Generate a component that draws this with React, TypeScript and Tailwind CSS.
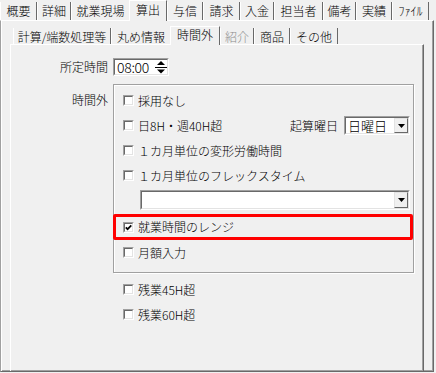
import React from "react";

type TabDef = { l: string; c: string; sel?: boolean; nr?: boolean; dis?: boolean };

const TOP: TabDef[] = [
  { l: "概要", c: "w-[37px]" },
  { l: "詳細", c: "w-[34px]" },
  { l: "就業現場", c: "w-[58px]", nr: true },
  { l: "算出", c: "w-[38px]", sel: true },
  { l: "与信", c: "w-[36px]" },
  { l: "請求", c: "w-[37px]" },
  { l: "入金", c: "w-[34px]" },
  { l: "担当者", c: "w-[49px]" },
  { l: "備考", c: "w-[33px]" },
  { l: "実績", c: "w-[36px]" },
  { l: "ﾌｧｲﾙ", c: "w-[37px]" },
];

const SUB: TabDef[] = [
  { l: "計算/端数処理等", c: "w-[98px]" },
  { l: "丸め情報", c: "w-[59px]", nr: true },
  { l: "時間外", c: "w-[50px]", sel: true },
  { l: "紹介", c: "w-[34px]", dis: true },
  { l: "商品", c: "w-[36px]" },
  { l: "その他", c: "w-[48px]" },
];

function TopTab({ t }: { t: TabDef }) {
  if (t.sel)
    return (
      <div
        className={`${t.c} relative z-10 -mb-[1px] flex h-[21px] items-center justify-center border-x border-t border-l-white border-t-white border-r-[#696969] bg-[#f0f0f0] pb-[2px]`}
      >
        {t.l}
      </div>
    );
  return (
    <div
      className={`${t.c} flex h-[18px] items-center justify-center ${
        t.nr ? "border-l border-l-white" : "border-x border-l-white border-r-[#696969]"
      }`}
    >
      {t.l}
    </div>
  );
}

function SubTab({ t }: { t: TabDef }) {
  if (t.sel)
    return (
      <div
        className={`${t.c} relative z-10 -mb-[1px] flex h-[19px] shrink-0 items-center justify-center border-x border-t border-l-white border-t-white border-r-[#696969] bg-[#f0f0f0] pb-[2px]`}
      >
        {t.l}
      </div>
    );
  return (
    <div
      className={`${t.c} flex h-[16px] shrink-0 items-center justify-center pt-[2px] ${
        t.nr ? "border-l border-l-white" : "border-x border-l-white border-r-[#696969]"
      } ${t.dis ? "text-[#8d8d8d]" : ""}`}
    >
      {t.l}
    </div>
  );
}

function Check({ checked }: { checked?: boolean }) {
  return (
    <span className="flex h-[11px] w-[11px] shrink-0 border border-t-[#a0a0a0] border-l-[#a0a0a0] border-b-white border-r-white">
      <span className="flex flex-1 items-center justify-center border border-t-[#696969] border-l-[#696969] border-b-[#e3e3e3] border-r-[#e3e3e3] bg-white">
        {checked && (
          <svg width="7" height="7" viewBox="0 0 7 7">
            <path d="M0.8 3.3 L2.6 5.2 L6.3 1.4" fill="none" stroke="#000" strokeWidth="1.7" />
          </svg>
        )}
      </span>
    </span>
  );
}

function CheckRow({ label, checked, className = "" }: { label: string; checked?: boolean; className?: string }) {
  return (
    <div className={`flex h-[25px] items-center ${className}`}>
      <Check checked={checked} />
      <span className="ml-[4px] whitespace-nowrap">{label}</span>
    </div>
  );
}

function Combo({ className = "", text = "" }: { className?: string; text?: string }) {
  return (
    <div className={`flex border border-t-[#a0a0a0] border-l-[#a0a0a0] border-b-white border-r-white ${className}`}>
      <div className="flex flex-1 border border-t-[#696969] border-l-[#696969] border-b-[#e3e3e3] border-r-[#e3e3e3] bg-white">
        <div className="flex flex-1 items-center pl-[2px] text-[13px]">{text}</div>
        <div className="flex w-[14px] items-center justify-center border border-t-[#e3e3e3] border-l-[#e3e3e3] border-b-[#696969] border-r-[#696969] bg-[#f0f0f0]">
          <svg width="7" height="4" viewBox="0 0 7 4">
            <path d="M0 0 H7 L3.5 4 Z" fill="#000" />
          </svg>
        </div>
      </div>
    </div>
  );
}

export default function App() {
  return (
    <div className="flex h-[373px] w-[436px] flex-col overflow-hidden bg-[#f0f0f0] font-['Noto_Sans_CJK_JP','Noto_Sans',sans-serif] text-[12px] font-light leading-none text-black">
      {/* top tab strip */}
      <div className="flex h-[20px] items-end">
        {TOP.map((t) => (
          <TopTab key={t.l} t={t} />
        ))}
      </div>

      {/* outer page */}
      <div className="flex h-[352px] w-[434px] flex-col border border-t-white border-l-[#a0a0a0] border-r-[#696969] border-b-[#696969] shadow-[inset_1px_0_0_#fff,inset_-1px_-1px_0_#a0a0a0]">
        {/* sub tab strip */}
        <div className="ml-[12px] mt-[7px] flex h-[16px] items-end">
          {SUB.map((t) => (
            <SubTab key={t.l} t={t} />
          ))}
        </div>

        {/* inner page */}
        <div className="ml-[9px] flex w-[414px] flex-1 flex-col border-l border-t border-r border-l-white border-t-white border-r-[#696969] shadow-[inset_-1px_0_0_#a0a0a0]">
          {/* 所定時間 */}
          <div className="mt-[13px] flex h-[18px] items-center">
            <div className="w-[97px] text-right">所定時間</div>
            <div className="ml-[5px] flex h-[18px] w-[56px] border border-t-[#a0a0a0] border-l-[#a0a0a0] border-b-white border-r-white">
              <div className="flex flex-1 items-center border border-t-[#696969] border-l-[#696969] border-b-[#e3e3e3] border-r-[#e3e3e3] bg-white">
                <span className="pl-[2px] text-[14px] tracking-[-0.3px]">08:00</span>
                <svg className="ml-auto" width="12" height="14" viewBox="0 0 12 14">
                  <path d="M2 5 H10 L6 1 Z" fill="#000" />
                  <path d="M0 7.5 H12" stroke="#000" strokeWidth="1" />
                  <path d="M2 9.5 H10 L6 13.5 Z" fill="#000" />
                </svg>
              </div>
            </div>
          </div>

          {/* 時間外 */}
          <div className="mt-[8px] flex">
            <div className="mt-[3px] flex h-[25px] w-[97px] items-center justify-end">時間外</div>
            <div className="ml-[5px] flex h-[189px] w-[301px] flex-col border border-[#a0a0a0] pt-[3px] shadow-[1px_1px_0_#fff,inset_1px_1px_0_#fff]">
              <CheckRow label="採用なし" className="pl-[9px]" />
              <div className="flex h-[25px] items-center pl-[9px] pr-[3px]">
                <Check />
                <span className="ml-[4px] whitespace-nowrap">日8H・週40H超</span>
                <span className="ml-auto whitespace-nowrap">起算曜日</span>
                <Combo className="ml-[6px] h-[19px] w-[66px]" text="日曜日" />
              </div>
              <CheckRow label="１カ月単位の変形労働時間" className="pl-[9px]" />
              <CheckRow label="１カ月単位のフレックスタイム" className="pl-[9px]" />
              <Combo className="ml-[26px] mt-[2px] h-[20px] w-[270px]" />
              <div className="-ml-[1px] mt-[4px] flex h-[26px] w-[300px] items-center rounded-[2px] border-[3px] border-[#ff0000] pl-[7px]">
                <Check checked />
                <span className="ml-[4px] whitespace-nowrap">就業時間のレンジ</span>
              </div>
              <CheckRow label="月額入力" className="pl-[9px]" />
            </div>
          </div>

          {/* 残業 */}
          <div className="ml-[102px] mt-[4px] flex flex-col pl-[10px]">
            <CheckRow label="残業45H超" />
            <CheckRow label="残業60H超" />
          </div>
        </div>
      </div>
    </div>
  );
}
